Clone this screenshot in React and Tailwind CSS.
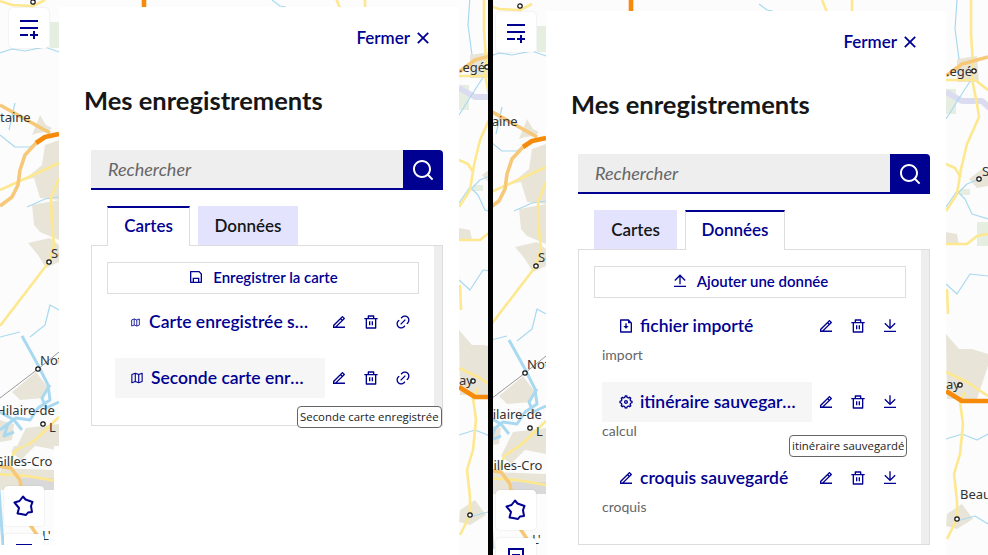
import {
  RiCloseLine, RiDeleteBinLine, RiDownloadLine, RiEdit2Line, RiFileDownloadLine, RiLink,
  RiMenuAddLine, RiSaveLine, RiSearchLine, RiSettings5Line, RiUploadLine,
} from 'react-icons/ri';

const navy = 'text-[#000091]';

const yellow = [
  'M0 1 L12 5 L33 6 L45 0',
  'M0 190 L20 181 L59 163',
  'M59 178 L51 198 L52 225 L54 245 L49 262 L0 326',
  'M484 -6 L484 30 L486 60 L485 75 L490 100 L492 113 L480 140 L474 165 L470 190 L459 207',
  'M459 76 L488 76 L501 86',
  'M459 160 L468 164 L473 172',
  'M459 240 L480 240 L490 232 L501 230',
  'M460 285 L461 310',
  'M59 417 L35 440 L17 452 L12 470',
  'M0 474 L30 476 L59 481',
  'M478 388 L473 398 L476 420 L473 450 L467 470 L470 497 L470 515 L460 535',
  'M459 368 L480 378 L501 392',
  'M335 -4 L340 8',
  'M365 -4 L365 8',
];
const tan = [
  'M0 105 L50 133',
  'M36 143 L25 155 L20 170 L18 185 L12 197 L0 206',
  'M459 72 L475 60 L501 53',
  'M0 466 L14 468 L23 480 L26 500',
  'M30 520 L40 535 L44 550',
];
const orange = ['M36 143 L45 137 L59 134', 'M459 387 L475 397 L501 397', 'M144 -4 L144 8'];
const blue = [
  'M0 53 L12 49 L25 51 L45 47 L59 52',
  'M15 103 L9 130',
  'M0 135 L15 147 L30 147 L36 143',
  'M27 207 L45 199 L59 197',
  'M30 337 L45 325 L50 305 L59 310',
  'M0 337 L20 332',
  'M470 -4 L468 25 L472 55',
  'M459 115 L478 85 L484 76',
  'M470 190 L480 180 L492 175',
  'M459 203 L470 187 L478 195 L485 210 L501 215',
  'M459 280 L470 290 L483 270 L501 272',
  'M459 435 L475 430 L490 436 L501 430',
  'M470 517 L488 512 L501 520',
  'M272 0 L280 6 L286 7',
];
const river = [
  'M22 336 L38 365 L48 385 L50 400 L38 408 L30 420 L16 418 L0 430',
  'M0 412 L14 420 L22 430',
  'M50 385 L42 398 L46 408 L59 402',
  'M8 424 L4 436 L14 432',
  'M2 490 L6 545',
];
const labels = [
  ['taine', 0, 122],
  ['Se', 51, 258],
  ['Not', 40, 365],
  ['Hilaire-de', -4, 415],
  ['L', 49, 432],
  ['Gilles-Cro', -3, 466],
  ['.egé', 459, 72],
  ['S', 495, 172],
  ['ay', 459, 385],
  ['Beau', 473, 495],
  ["L'", 45, 540],
];

// carte de fond, dessinée une seule fois puis décalée pour chaque écran
function MapBackground({ x = 0, y = 0, labelsFrom = -10, labelsTo = 600 }) {
  return (
    <svg
      className="absolute top-0 left-0"
      width="510"
      height="565"
      viewBox={`${-x} ${-y} 510 565`}
      fontFamily="'Noto Sans', sans-serif"
      fontSize="13"
      fill="#333"
    >
      <rect x="-10" y="-10" width="530" height="580" fill="#fcfcfc" />
      <g fill="#e8e5d8">
        <path d="M40 115 L46 125 L52 128 L48 132 L38 133 L32 135 Z" />
        <path d="M45 145 L59 140 L59 200 L40 198 L34 178 L24 180 L42 165 Z" />
        <path d="M32 205 L59 200 L59 240 L40 232 L34 225 Z" />
        <path d="M28 243 L50 238 L59 245 L59 262 L46 268 L38 255 Z" />
        <path d="M12 392 L36 372 L48 388 L44 398 L20 400 Z" />
        <path d="M0 420 L14 424 L12 440 L0 442 Z" />
        <path d="M26 428 L59 424 L59 450 L38 446 L24 460 L14 452 Z" />
        <path d="M4 468 L59 470 L59 490 L0 490 Z" />
        <path d="M459 330 L472 345 L485 345 L501 350 L501 362 L490 395 L460 395 Z" />
        <path d="M460 510 L475 500 L486 515 L470 525 L459 522 Z" />
        <path d="M482 175 L495 165 L501 168 L501 182 L490 184 Z" />
        <path d="M459 228 L470 230 L472 240 L459 240 Z" />
        <path d="M470 55 L490 52 L492 78 L470 78 Z" />
      </g>
      <g fill="#e6eee2">
        <rect x="50" y="22" width="9" height="26" />
        <rect x="459" y="85" width="10" height="25" />
        <rect x="490" y="218" width="11" height="24" />
        <rect x="473" y="185" width="10" height="6" />
      </g>
      <rect x="25" y="478" width="34" height="12" fill="#d9d9d9" />
      <g fill="none" strokeLinejoin="round">
        <path d="M459 88 L475 97 L495 97 L505 106" stroke="#dcdcf0" strokeWidth="6" />
        <path d="M0 398 L38 369 L59 352" stroke="#999" strokeWidth="1" />
        {blue.map((d) => <path key={d} d={d} stroke="#a9d9f0" strokeWidth="1.2" />)}
        {river.map((d) => <path key={d} d={d} stroke="#a9d9f0" strokeWidth="3" />)}
        {yellow.map((d) => <path key={d} d={d} stroke="#fde88f" strokeWidth="2.6" />)}
        {tan.map((d) => <path key={d} d={d} stroke="#f6c878" strokeWidth="3.6" />)}
        {orange.map((d) => <path key={d} d={d} stroke="#f58a0b" strokeWidth="4.6" />)}
        {[[33, 2], [49, 262], [38, 369], [43, 424], [487, 67], [492, 175], [473, 381], [470, 515]].map(([cx, cy]) => (
          <circle key={cx} cx={cx} cy={cy} r="2.2" fill="#fff" stroke="#111" strokeWidth="1.2" />
        ))}
      </g>
      {labels.filter((l) => l[2] >= labelsFrom && l[2] < labelsTo).map(([t, lx, ly]) => (
        <text key={t} x={lx} y={ly}>{t}</text>
      ))}
    </svg>
  );
}

function MapButton({ className, children }) {
  return (
    <div className={`absolute flex h-10 w-10 items-center justify-center rounded bg-white shadow-[0_0_2px_rgba(0,0,0,0.12)] ${navy} ${className}`}>
      {children}
    </div>
  );
}

function FranceIcon() {
  return (
    <svg width="22" height="22" viewBox="0 0 22 22" fill="none" stroke="currentColor" strokeWidth="2" strokeLinejoin="round">
      <path d="M10 1.5 L12.5 4.5 L19.5 7 L18 11 L19 17 L15 17.5 L13 20 L8 19 L4.5 18.5 L6 13 L1.5 7.5 L6.5 6 Z" />
    </svg>
  );
}

// carte pliée en trois volets
function FoldedMapIcon({ size, className }) {
  return (
    <svg className={className} width={size} height={size} viewBox="0 0 14 14" fill="none" stroke="currentColor" strokeWidth="1.3" strokeLinejoin="round">
      <path d="M1 3 L5 1.5 L9 3 L13 1.5 L13 11 L9 12.5 L5 11 L1 12.5 Z" />
      <path d="M5 1.5 L5 11 M9 3 L9 12.5" />
    </svg>
  );
}

function Row({ icon, iconSize = 12, title, subtitle, hover, actions, textGap = 'ml-[6px]' }) {
  return (
    <div className="mb-4">
      <div className="flex items-center">
        <div className={`ml-2 flex h-10 w-[210px] items-center pl-4 ${hover ? 'bg-[#f6f6f6]' : ''}`}>
          {icon({ size: iconSize, className: 'shrink-0' })}
          <span className={`w-[160px] truncate text-[17.5px] leading-6 font-semibold ${textGap}`}>{title}</span>
        </div>
        <div className="ml-[6px] flex gap-[16px]">
          <RiEdit2Line size={16} />
          <RiDeleteBinLine size={16} />
          {actions === 'link' ? <RiLink size={16} /> : <RiDownloadLine size={16} />}
        </div>
      </div>
      {subtitle && <div className="ml-2 h-5 text-[14px] leading-[18px] font-normal text-[#666]">{subtitle}</div>}
    </div>
  );
}

function Tooltip({ className, children }) {
  return (
    <div
      className={`absolute flex h-[22px] items-center rounded-[4px] border border-[#666] bg-white px-[2px] text-[11.4px] whitespace-nowrap text-[#222] ${className}`}
      style={{ fontFamily: "'Open Sans', sans-serif" }}
    >
      {children}
    </div>
  );
}

function Panel({ active, boxHeight, children }) {
  const tabOn = `h-10 border-x border-t-2 border-x-[#ddd] border-t-[#000091] bg-white pb-[2px] ${navy} relative z-10`;
  const tabOff = 'h-10 bg-[#e3e3fd] text-[#161616]';
  return (
    <div className="relative flex h-full w-[400px] flex-col bg-white" style={{ fontFamily: "Lato, sans-serif" }}>
      <div className={`mt-[19px] flex h-6 items-center justify-end gap-[2px] pr-[25px] text-[17px] font-semibold ${navy}`}>
        Fermer <RiCloseLine size={22} />
      </div>
      <h1 className="mt-[34px] ml-[25px] text-[25.5px] leading-8 font-bold text-[#161616]">Mes enregistrements</h1>
      <div className="mt-[34px] ml-8 flex h-10 w-[352px]">
        <div className="flex flex-1 items-center border-b-2 border-[#000091] bg-[#eeeeee] pl-[17px] text-[18px] text-[#666] italic">
          Rechercher
        </div>
        <div className="flex w-10 items-center justify-center rounded-tr bg-[#000091] text-white">
          <RiSearchLine size={24} />
        </div>
      </div>
      <div className="mt-4 ml-12 flex gap-2 text-[17px] leading-6 font-semibold">
        <div className={`flex w-[83px] items-center justify-center ${active === 'cartes' ? tabOn : tabOff}`}>Cartes</div>
        <div className={`flex w-[100px] items-center justify-center ${active === 'donnees' ? tabOn : tabOff}`}>Données</div>
      </div>
      <div className={`-mt-px ml-8 flex w-[352px] border border-[#ddd] ${boxHeight} ${navy}`}>
        <div className="flex-1 pt-4 pl-[15px]">{children}</div>
        <div className="w-2 bg-[#eeeeee]" />
      </div>
    </div>
  );
}

function AddButton({ icon, label }) {
  return (
    <div className="mb-2 flex h-8 w-[312px] items-center justify-center gap-[9px] border border-[#ddd] pb-[2px] text-[15px] font-semibold">
      {icon}
      {label}
    </div>
  );
}

export default function App() {
  return (
    <div className="flex h-[555px] w-[988px] overflow-hidden bg-white">
      {/* écran de gauche : onglet Cartes */}
      <div className="relative h-full w-[488px] shrink-0 overflow-hidden pt-[7px] pl-[59px]">
        <MapBackground labelsTo={446} />
        <div className="absolute top-[446px] left-0 h-[99px] w-[54px] overflow-hidden">
          <div className="absolute top-[-446px] left-[-3px]">
            <MapBackground labelsFrom={446} />
          </div>
        </div>
        <div className="absolute top-[446px] left-[54px] h-[109px] w-[5px] bg-white" />
        <MapButton className="top-2 left-[9px]"><RiMenuAddLine size={24} /></MapButton>
        <MapButton className="top-[486px] left-1"><FranceIcon /></MapButton>
        <MapButton className="top-[534px] left-1 items-start pt-[10px]"><div className="h-[2px] w-4 bg-[#000091]" /></MapButton>
        <div className="absolute top-[545px] left-0 h-[10px] w-[54px] bg-white" />
        <Panel active="cartes" boxHeight="h-[181px]">
          <AddButton icon={<RiSaveLine size={16} />} label="Enregistrer la carte" />
          <Row icon={FoldedMapIcon} iconSize={9} textGap="ml-[9px]" title="Carte enregistrée sur le compte" actions="link" />
          <Row icon={FoldedMapIcon} iconSize={12} textGap="ml-[8px]" title="Seconde carte enregistrée" actions="link" hover />
        </Panel>
        <Tooltip className="top-[406px] left-[297px]">Seconde carte enregistrée</Tooltip>
      </div>

      <div className="w-[5px] shrink-0 bg-black" />

      {/* écran de droite : onglet Données */}
      <div className="relative h-full flex-1 overflow-hidden pt-[11px] pl-[53px]">
        <MapBackground x={-6} y={4} />
        <MapButton className="top-3 left-[3px]"><RiMenuAddLine size={24} /></MapButton>
        <MapButton className="top-[490px] left-[3px]"><FranceIcon /></MapButton>
        <MapButton className="top-[538px] left-[3px] items-start pt-[10px]">
          <div className="flex h-5 w-4 justify-center border-2 border-[#000091] pt-1"><div className="h-[2px] w-2 bg-[#000091]" /></div>
        </MapButton>
        <Panel active="donnees" boxHeight="h-[296px]">
          <AddButton icon={<RiUploadLine size={16} />} label="Ajouter une donnée" />
          <Row icon={RiFileDownloadLine} iconSize={16} title="fichier importé" subtitle="import" />
          <Row icon={RiSettings5Line} iconSize={16} title="itinéraire sauvegardé" subtitle="calcul" hover />
          <Row icon={RiEdit2Line} iconSize={16} title="croquis sauvegardé" subtitle="croquis" />
        </Panel>
        <Tooltip className="top-[435px] left-[296px]">itinéraire sauvegardé</Tooltip>
      </div>
    </div>
  );
}
